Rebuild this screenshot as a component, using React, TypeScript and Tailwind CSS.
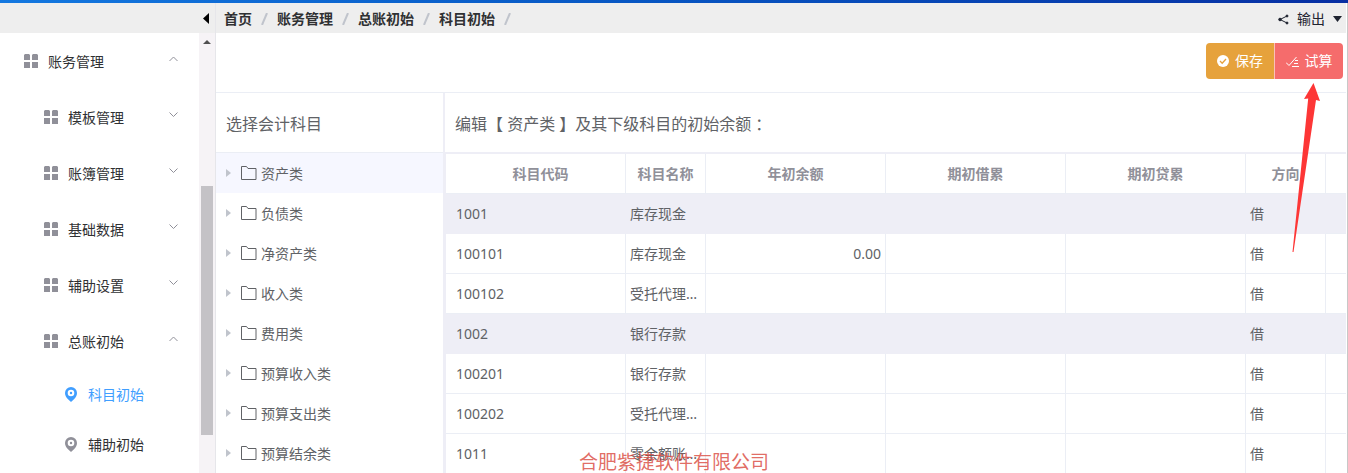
import React from "react";

type MenuItem = { label: string; open: boolean; level: 1 | 2 };

const menu: MenuItem[] = [
  { label: "账务管理", open: true, level: 1 },
  { label: "模板管理", open: false, level: 2 },
  { label: "账簿管理", open: false, level: 2 },
  { label: "基础数据", open: false, level: 2 },
  { label: "辅助设置", open: false, level: 2 },
  { label: "总账初始", open: true, level: 2 },
];

const pages = [
  { label: "科目初始", active: true },
  { label: "辅助初始", active: false },
];

const crumbs = ["首页", "账务管理", "总账初始", "科目初始"];

const subjects = [
  "资产类",
  "负债类",
  "净资产类",
  "收入类",
  "费用类",
  "预算收入类",
  "预算支出类",
  "预算结余类",
];

const columns = ["科目代码", "科目名称", "年初余额", "期初借累", "期初贷累", "方向", ""];

const rows = [
  { code: "1001", name: "库存现金", amount: "", parent: true },
  { code: "100101", name: "库存现金", amount: "0.00", parent: false },
  { code: "100102", name: "受托代理资产", amount: "", parent: false },
  { code: "1002", name: "银行存款", amount: "", parent: true },
  { code: "100201", name: "银行存款", amount: "", parent: false },
  { code: "100202", name: "受托代理资产", amount: "", parent: false },
  { code: "1011", name: "零余额账户用款额度", amount: "", parent: false },
];

function GridIcon() {
  return (
    <svg width="14" height="14" viewBox="0 0 14 14" fill="#909099" aria-hidden="true">
      <path d="M0 1L1 0H5L6 1V6H0zM8 1L9 0H13L14 1V6H8zM0 8H6V14H0zM8 8H14V14H8z" />
    </svg>
  );
}

function PinIcon() {
  return (
    <svg width="12" height="15" viewBox="0 0 12 15" fill="currentColor" aria-hidden="true">
      <path
        fillRule="evenodd"
        d="M6 0a6 6 0 0 1 6 6c0 2.600-1.200 4.400-2.800 6L6 15 2.800 12C1.200 10.400 0 8.600 0 6a6 6 0 0 1 6-6zM6 2.700a3.300 3.300 0 1 0 0 6.600 3.300 3.300 0 0 0 0-6.600z"
      />
      <circle cx="6" cy="6" r="1.200" />
    </svg>
  );
}

function Chevron({ open }: { open: boolean }) {
  return (
    <svg width="9" height="6" viewBox="0 0 9 6" fill="none" stroke="#909099" aria-hidden="true">
      <path d={open ? "M.5 5L4.500 1L8.500 5" : "M.5 .5L4.500 4.500L8.500 .5"} />
    </svg>
  );
}

function FolderIcon() {
  return (
    <svg width="16" height="14" viewBox="0 0 16 14" fill="none" stroke="#606266" aria-hidden="true">
      <path d="M.5 .5H5.500L7 2.500H15V13.500H.5z" />
    </svg>
  );
}

function Sidebar() {
  return (
    <aside className="flex w-[216px] shrink-0 flex-col border-r border-[#e6e6ea]">
      <div className="flex h-[30px] shrink-0 items-center justify-end bg-[#eee] pr-[6px]">
        <button aria-label="收起菜单">
          <svg width="6" height="11" viewBox="0 0 6 11" className="block">
            <path d="M6 0V11L0 5.500z" />
          </svg>
        </button>
      </div>
      <div className="flex min-h-0 flex-1">
        <nav className="min-w-0 flex-1 overflow-hidden text-[#303133]">
          {menu.map((item) => (
            <button
              key={item.label}
              className={`flex h-14 w-full items-center pr-[21px] ${item.level === 1 ? "pl-6" : "pl-11"}`}
            >
              <GridIcon />
              <span className="ml-[10px] pt-[2px]">{item.label}</span>
              <span className="ml-auto pb-1">
                <Chevron open={item.open} />
              </span>
            </button>
          ))}
          {pages.map((page) => (
            <a
              key={page.label}
              href="#"
              className={`flex h-[50px] items-center pl-[65px] ${page.active ? "text-[#409eff]" : ""}`}
            >
              <span className={page.active ? "" : "text-[#909099]"}>
                <PinIcon />
              </span>
              <span className="ml-[11px] pt-[2px]">{page.label}</span>
            </a>
          ))}
        </nav>
        <div className="flex w-4 shrink-0 flex-col items-center bg-[#f6f3f6] pt-[7px]" aria-hidden="true">
          <svg width="8" height="4" viewBox="0 0 8 4" fill="#505050">
            <path d="M4 0L8 4H0z" />
          </svg>
          <div className="mt-[142px] h-[249px] w-3 shrink-0 bg-[#c4c2c6]" />
        </div>
      </div>
    </aside>
  );
}

function Header() {
  return (
    <header className="flex h-[30px] shrink-0 items-center justify-between bg-[#eee] pt-[2px] pr-1 pl-2">
      <nav className="flex items-center font-bold text-[#303133]">
        {crumbs.map((crumb) => (
          <React.Fragment key={crumb}>
            <a href="#">{crumb}</a>
            <svg width="7" height="12" viewBox="0 0 7 12" className="mx-[9px]" stroke="#c0c4cc" strokeWidth="2" aria-hidden="true">
              <path d="M6 0L1 12" />
            </svg>
          </React.Fragment>
        ))}
      </nav>
      <button className="flex items-center text-[#1f2430]">
        <svg width="11" height="11" viewBox="0 0 11 11" fill="#1f2430" stroke="#1f2430" aria-hidden="true">
          <circle cx="9" cy="2" r="1" />
          <circle cx="2" cy="5.500" r="1.300" />
          <circle cx="9" cy="9" r="1" />
          <path d="M9 2L2 5.500L9 9" fill="none" />
        </svg>
        <span className="ml-2">输出</span>
        <svg width="9" height="6" viewBox="0 0 9 6" fill="#1f2430" className="ml-2" aria-hidden="true">
          <path d="M0 0H9L4.500 6z" />
        </svg>
      </button>
    </header>
  );
}

function Toolbar() {
  return (
    <div className="flex h-[60px] shrink-0 items-start justify-end border-b border-[#ebeef5] pt-[10px] pr-[3px] text-white">
      <button className="flex h-9 w-[68px] items-center justify-center gap-[6px] rounded-l bg-[#e6a23c]">
        <svg width="12" height="12" viewBox="0 0 12 12" aria-hidden="true">
          <circle cx="6" cy="6" r="6" fill="#fff" />
          <path d="M3 6L5.200 8.200L9 4" fill="none" stroke="#e6a23c" strokeWidth="1.300" />
        </svg>
        保存
      </button>
      <button className="flex h-9 w-[69px] items-center justify-center gap-[6px] rounded-r border-l border-[#fbc0b8] bg-[#f56c6c]">
        <svg width="13" height="11" viewBox="0 0 13 11" fill="none" stroke="#fff" aria-hidden="true">
          <path d="M0 6.500L3 9.500L10.500 1M9 4.500H12M8 7.500H12M6 10.500H13" />
        </svg>
        试算
      </button>
    </div>
  );
}

function SubjectTree() {
  return (
    <section className="w-[229px] shrink-0 border-r-2 border-[#eeeef6]">
      <h2 className="flex h-[60px] items-center border-b border-[#ebeef5] pt-[2px] pl-[10px] text-base">选择会计科目</h2>
      <ul>
        {subjects.map((subject, i) => (
          <li key={subject}>
            <button className={`flex h-10 w-full items-center pl-[10px] ${i === 0 ? "bg-[#f6f7ff]" : ""}`}>
              <svg width="5" height="8" viewBox="0 0 5 8" fill="#c0c4cc" aria-hidden="true">
                <path d="M0 0L5 4L0 8z" />
              </svg>
              <span className="ml-[10px]">
                <FolderIcon />
              </span>
              <span className="ml-1 pt-[2px]">{subject}</span>
            </button>
          </li>
        ))}
      </ul>
    </section>
  );
}

const line = "border-r border-b border-[#ebeef5]";

function BalanceTable() {
  return (
    <section className="min-w-0 flex-1">
      <h2 className="flex h-[60px] items-center border-b border-[#eeeef6] pt-[2px] pl-[10px] text-base whitespace-pre">
        编辑【 资产类 】及其下级科目的初始余额
        <span className="font-['Noto_Sans_CJK_TC',sans-serif]">：</span>
      </h2>
      <div className="border-t border-l border-[#eeeef6]">
        <table className="w-full table-fixed border-separate border-spacing-0">
          <colgroup>
            <col className="w-[180px]" />
            <col className="w-20" />
            <col className="w-[180px]" />
            <col className="w-[180px]" />
            <col className="w-[180px]" />
            <col className="w-20" />
            <col />
          </colgroup>
          <thead>
            <tr className="h-10 text-[#909099]">
              {columns.map((column, i) => (
                <th key={i} className={`p-0 font-bold ${line} ${i === 0 ? "pl-[10px]" : ""} ${i === 6 ? "border-r-0" : ""}`}>
                  {column}
                </th>
              ))}
            </tr>
          </thead>
          <tbody>
            {rows.map((row) => {
              const cell = row.parent ? "border-b border-[#eeeef6]" : line;
              return (
                <tr key={row.code} className={`h-10 ${row.parent ? "bg-[#eeeef6]" : ""}`}>
                  <td className={`py-0 pr-1 pl-[10px] ${cell}`}>{row.code}</td>
                  <td className={`truncate px-1 py-0 ${cell}`}>{row.name}</td>
                  <td className={`px-1 py-0 text-right ${cell}`}>{row.amount}</td>
                  <td className={cell} />
                  <td className={cell} />
                  <td className={`px-1 py-0 ${cell}`}>借</td>
                  <td className="border-b border-[#ebeef5]" />
                </tr>
              );
            })}
          </tbody>
        </table>
      </div>
    </section>
  );
}

export default function App() {
  return (
    <div className="relative flex h-screen flex-col overflow-hidden bg-white font-['Noto_Sans','Noto_Sans_CJK_SC',sans-serif] text-sm leading-5 text-[#606266]">
      <div className="h-[3px] shrink-0 bg-linear-to-r from-[#1478e0] to-[#082fa3]" />
      <div className="flex min-h-0 flex-1 border-r border-[#c8c8c8] pr-px">
        <Sidebar />
        <main className="flex min-w-0 flex-1 flex-col">
          <Header />
          <Toolbar />
          <div className="flex min-h-0 flex-1 overflow-hidden">
            <SubjectTree />
            <BalanceTable />
          </div>
        </main>
      </div>
      <svg
        width="30"
        height="170"
        viewBox="0 0 30 170"
        className="pointer-events-none absolute top-[83px] right-[28px]"
        aria-hidden="true"
      >
        <path d="M23.500 0L14 16L18.200 15.500L2.500 169H3.500L26 17L30 18z" fill="#fd3636" />
      </svg>
      <p className="pointer-events-none absolute inset-x-0 bottom-0 text-center text-[19px] leading-[22px] text-[#d9463c]/80">
        合肥紫捷软件有限公司
      </p>
    </div>
  );
}
